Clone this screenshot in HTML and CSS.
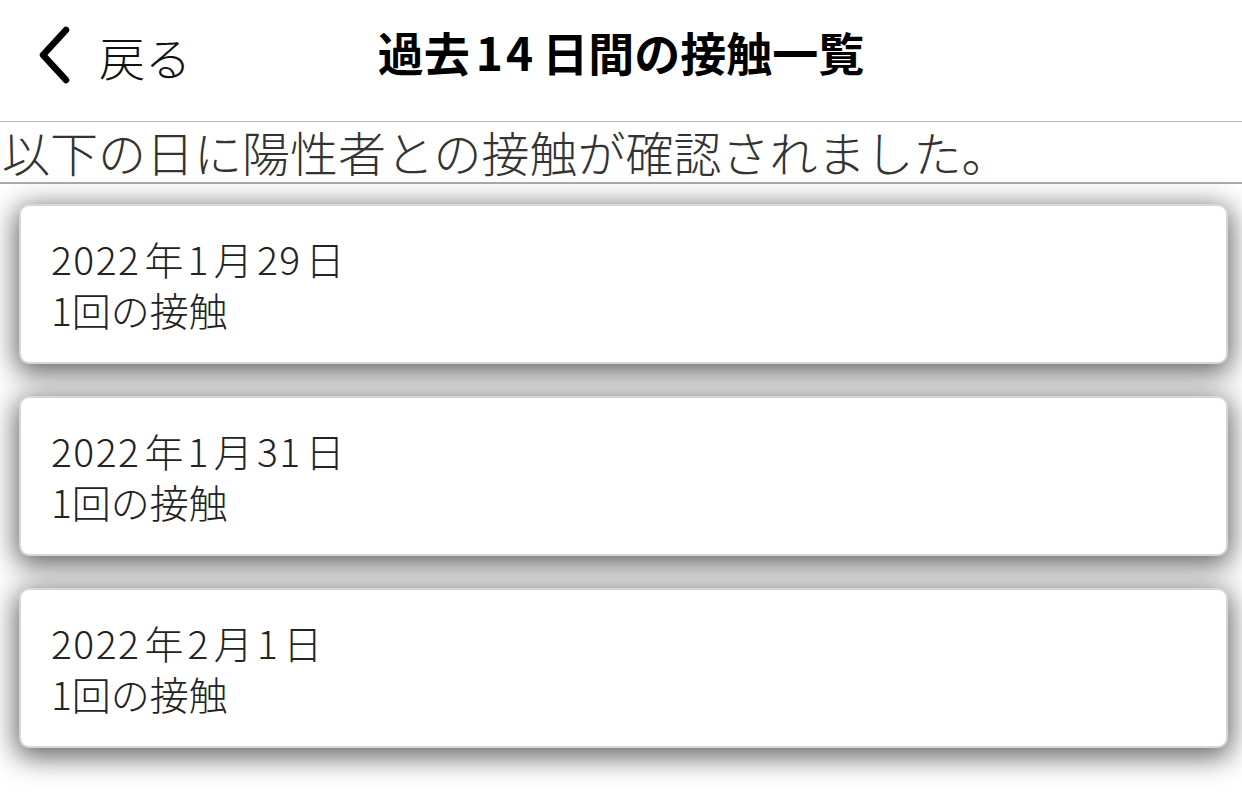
FILE: index.html
```html
<!DOCTYPE html>
<html lang="ja">
<head>
    <meta charset="UTF-8">
    <meta name="viewport" content="width=device-width, initial-scale=1.0">
    <title>過去14日間の接触一覧</title>
    <link rel="stylesheet" href="styles.css">
</head>
<body>
    <header class="nav-bar">
        <a class="back-button" href="#">
            <svg class="back-icon" width="40" height="60" viewBox="0 0 40 60">
                <path d="M32 4 L9 29 L32 54" fill="none" stroke="#000" stroke-width="6.5" stroke-linecap="round" stroke-linejoin="round"/>
            </svg>
            <span>戻る</span>
        </a>
        <h1 class="nav-title">過去<span class="num">14</span>日間の接触一覧</h1>
    </header>

    <p class="notice">以下の日に陽性者との接触が確認されました。</p>

    <ul class="contact-list">
        <li class="contact-card">
            <div><span class="num">2022</span>年<span class="num">1</span>月<span class="num">29</span>日</div>
            <div>1回の接触</div>
        </li>
        <li class="contact-card">
            <div><span class="num">2022</span>年<span class="num">1</span>月<span class="num">31</span>日</div>
            <div>1回の接触</div>
        </li>
        <li class="contact-card">
            <div><span class="num">2022</span>年<span class="num">2</span>月<span class="num">1</span>日</div>
            <div>1回の接触</div>
        </li>
    </ul>
</body>
</html>
```

FILE: styles.css
```css
body {
    margin: 0;
    background: #fff;
    color: #222;
    font-family: "Noto Sans CJK JP", "Noto Sans", sans-serif;
}
.nav-bar {
    position: relative;
    height: 121px;
    display: flex;
    align-items: center;
    justify-content: center;
    border-bottom: 1px solid #b8b8b8;
}
.back-button {
    position: absolute;
    left: 34px;
    top: 23px;
    display: flex;
    align-items: center;
    gap: 25px;
    color: #111;
    text-decoration: none;
    font-size: 46px;
    font-weight: 300;
}
.back-icon {
    display: block;
}
.nav-title {
    margin: 0 0 20px;
    font-size: 46px;
    font-weight: bold;
    color: #000;
}
.nav-title .num {
    margin: 0 6px;
    letter-spacing: 3px;
}
.notice {
    margin: 0;
    padding: 0 2px;
    height: 60px;
    line-height: 58px;
    font-size: 48px;
    font-weight: 300;
    color: #333;
    border-bottom: 2px solid #ababab;
}
.contact-list {
    list-style: none;
    margin: 0;
    padding: 20px 14px 40px 19px;
    display: flex;
    flex-direction: column;
    gap: 32px;
}
.contact-card {
    box-sizing: border-box;
    height: 160px;
    padding: 27px 30px;
    background: #fff;
    border: 2px solid #d6d6d6;
    border-radius: 10px;
    box-shadow: 0 6px 28px 3px rgba(0, 0, 0, 0.62);
    font-size: 39px;
    font-weight: 300;
    line-height: 51px;
    color: #222;
}
.contact-card .num {
    margin: 0 4px;
    letter-spacing: 1.5px;
}
.contact-card .num:first-child {
    margin-left: 0;
}
```
